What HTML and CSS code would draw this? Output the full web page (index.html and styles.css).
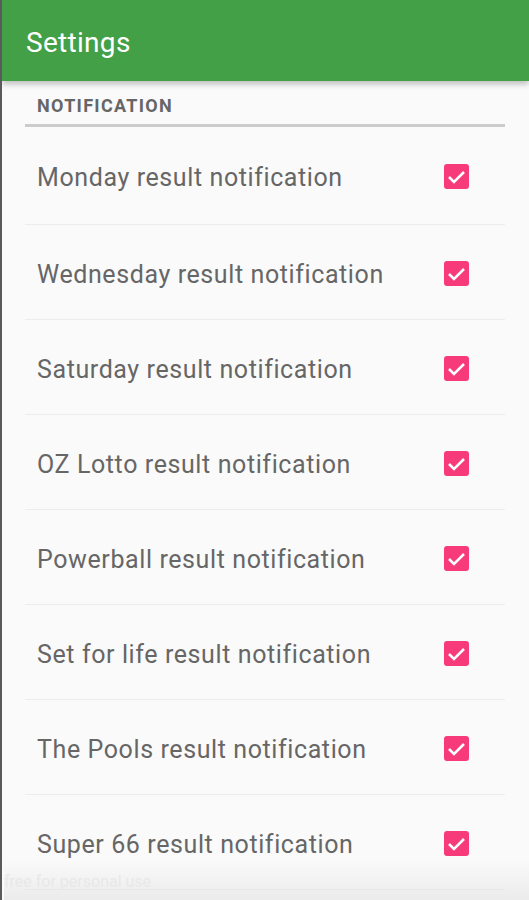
FILE: index.html
```html
<!DOCTYPE html>
<html lang="en">
<head>
    <meta charset="UTF-8">
    <meta name="viewport" content="width=device-width, initial-scale=1.0">
    <title>Settings</title>
    <link rel="stylesheet" href="styles.css">
</head>
<body>
    <div class="app-bar">Settings</div>

    <div class="content">
        <div class="section-title">NOTIFICATION</div>
        <ul class="prefs">
            <li><span>Monday result notification</span><svg class="check" viewBox="0 0 25 25"><rect width="25" height="25" rx="3"/><polyline points="5,13 10,18 20,8"/></svg></li>
            <li><span>Wednesday result notification</span><svg class="check" viewBox="0 0 25 25"><rect width="25" height="25" rx="3"/><polyline points="5,13 10,18 20,8"/></svg></li>
            <li><span>Saturday result notification</span><svg class="check" viewBox="0 0 25 25"><rect width="25" height="25" rx="3"/><polyline points="5,13 10,18 20,8"/></svg></li>
            <li><span>OZ Lotto result notification</span><svg class="check" viewBox="0 0 25 25"><rect width="25" height="25" rx="3"/><polyline points="5,13 10,18 20,8"/></svg></li>
            <li><span>Powerball result notification</span><svg class="check" viewBox="0 0 25 25"><rect width="25" height="25" rx="3"/><polyline points="5,13 10,18 20,8"/></svg></li>
            <li><span>Set for life result notification</span><svg class="check" viewBox="0 0 25 25"><rect width="25" height="25" rx="3"/><polyline points="5,13 10,18 20,8"/></svg></li>
            <li><span>The Pools result notification</span><svg class="check" viewBox="0 0 25 25"><rect width="25" height="25" rx="3"/><polyline points="5,13 10,18 20,8"/></svg></li>
            <li><span>Super 66 result notification</span><svg class="check" viewBox="0 0 25 25"><rect width="25" height="25" rx="3"/><polyline points="5,13 10,18 20,8"/></svg></li>
        </ul>
    </div>

    <div class="watermark">free for personal use</div>
</body>
</html>
```

FILE: styles.css
```css
body {
    margin: 0;
    height: 900px;
    overflow: hidden;
    background-color: #fafafa;
    border-left: 2px solid #5a5a5a;
    font-family: Roboto, "Noto Sans", sans-serif;
    position: relative;
}
.app-bar {
    height: 81px;
    display: flex;
    align-items: center;
    padding-left: 24px;
    padding-top: 3px;
    box-sizing: border-box;
    background-color: #43a047;
    color: #fff;
    font-size: 28px;
    letter-spacing: 0.3px;
    box-shadow: 0 3px 6px rgba(0,0,0,0.25);
    position: relative;
    z-index: 1;
}
.content {
    padding: 0 24px 0 23px;
}
.section-title {
    padding: 14px 12px 8px;
    font-size: 18px;
    font-weight: bold;
    letter-spacing: 1.3px;
    color: #666;
    border-bottom: 3px solid #ccc;
}
.prefs {
    list-style-type: none;
    margin: 0;
    padding: 0;
}
.prefs li {
    height: 95px;
    box-sizing: border-box;
    display: flex;
    align-items: center;
    justify-content: space-between;
    padding: 4px 36px 0 12px;
    border-bottom: 1px solid #ececec;
    font-size: 25px;
    letter-spacing: 0.6px;
    color: #666;
}
.prefs li:first-child {
    height: 98px;
}
.check {
    width: 25px;
    height: 25px;
    margin-top: -2px;
}
.check rect {
    fill: #f73b7a;
}
.check polyline {
    fill: none;
    stroke: #fff;
    stroke-width: 2.5;
}
.watermark {
    position: absolute;
    left: 2px;
    bottom: 0;
    width: 100%;
    height: 40px;
    padding-top: 12px;
    box-sizing: border-box;
    font-size: 16px;
    color: #e8e8e8;
    background: linear-gradient(rgba(230,230,230,0), rgba(225,225,225,0.6));
}
```
